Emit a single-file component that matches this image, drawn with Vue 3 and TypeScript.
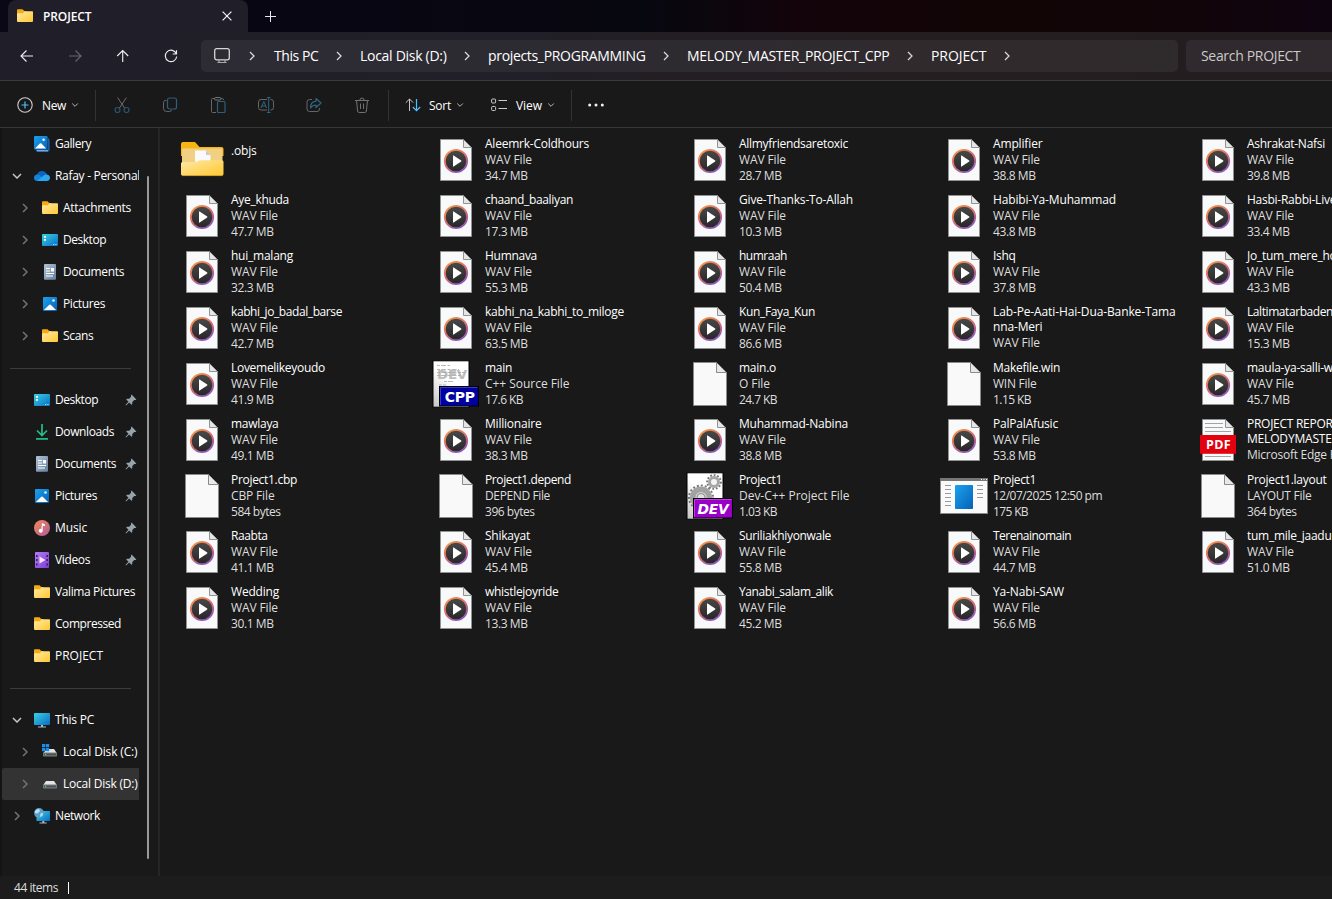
<script setup lang="ts">
interface Crumb { label: string; width: number }
interface NavItem {
  label: string
  icon: string
  depth?: number
  chevron?: 'open' | 'closed'
  pinned?: boolean
  selected?: boolean
  separator?: boolean
}
interface FileItem { icon: string; name: string[]; meta: string[] }

const crumbs: Crumb[] = [
  { label: 'This PC', width: 45 },
  { label: 'Local Disk (D:)', width: 87 },
  { label: 'projects_PROGRAMMING', width: 158 },
  { label: 'MELODY_MASTER_PROJECT_CPP', width: 203 },
  { label: 'PROJECT', width: 56 },
]

const tools = ['cut', 'copy', 'paste', 'rename', 'share', 'trash']

/* Label widths in pixels at 12px, used to tune the tracking of each label. */
const widths: Record<string, number> = {
  'Aleemrk-Coldhours': 104, 'Allmyfriendsaretoxic': 109, 'Amplifier': 49.5, 'Ashrakat-Nafsi': 78,
  'Aye_khuda': 58, 'chaand_baaliyan': 88, 'Give-Thanks-To-Allah': 114, 'Habibi-Ya-Muhammad': 123,
  'hui_malang': 62, 'Humnava': 52, 'humraah': 48, 'Ishq': 22.5, 'kabhi_jo_badal_barse': 111,
  'kabhi_na_kabhi_to_miloge': 139, 'Kun_Faya_Kun': 76, 'Lab-Pe-Aati-Hai-Dua-Banke-Tama': 182.5,
  'nna-Meri': 49.5, 'Laltimatarbaden': 86, 'Lovemelikeyoudo': 94, 'main': 27, 'main.o': 37,
  'Makefile.win': 67, 'mawlaya': 47.5, 'Millionaire': 56.5, 'Muhammad-Nabina': 109, 'PalPalAfusic': 65,
  'Project1.cbp': 66, 'Project1.depend': 86, 'Project1': 43, 'Project1.layout': 79.5, 'Raabta': 36.5,
  'Shikayat': 45, 'Suriliakhiyonwale': 92, 'Terenainomain': 78, 'tum_mile_jaadu': 84.5, 'Wedding': 48,
  'whistlejoyride': 73.5, 'Yanabi_salam_alik': 94, 'Ya-Nabi-SAW': 71, 'PROJECT REPORT': 92,
  'MELODYMASTER': 92, 'WAV File': 47, 'C++ Source File': 84.5, 'O File': 31, 'WIN File': 43.5,
  'CBP File': 43.5, 'DEPEND File': 65, 'Dev-C++ Project File': 110.5, '12/07/2025 12:50 pm': 109,
  'LAYOUT File': 64.5, '17.6 KB': 38, '24.7 KB': 38, '1.15 KB': 38, '1.03 KB': 38, '175 KB': 35,
  '584 bytes': 49.5, '396 bytes': 49.5, '364 bytes': 49.5, '.objs': 25.5,
  'Gallery': 36, 'Rafay - Personal': 85, 'Attachments': 68, 'Desktop': 43, 'Documents': 61,
  'Pictures': 42, 'Scans': 30.5, 'Downloads': 59, 'Music': 32, 'Videos': 35, 'Valima Pictures': 80,
  'Compressed': 66, 'PROJECT': 48, 'This PC': 39, 'Local Disk (C:)': 74.5, 'Local Disk (D:)': 74.5,
  'Network': 45,
}

const labelWidth = (text: string): number =>
  widths[text] ?? (/^\d\d\.\d MB$/.test(text) ? 42.5 : 0)

const vFit = {
  mounted(el: HTMLElement, binding: { value: number }) {
    const text = el.textContent ?? ''
    if (!binding.value || !text.length) return
    el.style.letterSpacing = '0px'
    const range = document.createRange()
    range.selectNodeContents(el)
    const natural = range.getBoundingClientRect().width
    el.style.letterSpacing = ((binding.value - natural) / text.length).toFixed(3) + 'px'
  },
}

const sep: NavItem = { label: '', icon: '', separator: true }
const nav: NavItem[] = [
  { label: 'Gallery', icon: 'gallery' },
  { label: 'Rafay - Personal', icon: 'cloud', chevron: 'open' },
  { label: 'Attachments', icon: 'folder', depth: 1, chevron: 'closed' },
  { label: 'Desktop', icon: 'desktop', depth: 1, chevron: 'closed' },
  { label: 'Documents', icon: 'documents', depth: 1, chevron: 'closed' },
  { label: 'Pictures', icon: 'pictures', depth: 1, chevron: 'closed' },
  { label: 'Scans', icon: 'folder', depth: 1, chevron: 'closed' },
  sep,
  { label: 'Desktop', icon: 'desktop', pinned: true },
  { label: 'Downloads', icon: 'downloads', pinned: true },
  { label: 'Documents', icon: 'documents', pinned: true },
  { label: 'Pictures', icon: 'pictures', pinned: true },
  { label: 'Music', icon: 'music', pinned: true },
  { label: 'Videos', icon: 'videos', pinned: true },
  { label: 'Valima Pictures', icon: 'folder' },
  { label: 'Compressed', icon: 'folder' },
  { label: 'PROJECT', icon: 'folder' },
  sep,
  { label: 'This PC', icon: 'pc', chevron: 'open' },
  { label: 'Local Disk (C:)', icon: 'diskc', depth: 1, chevron: 'closed' },
  { label: 'Local Disk (D:)', icon: 'disk', depth: 1, chevron: 'closed', selected: true },
  { label: 'Network', icon: 'network', chevron: 'closed' },
]

const wav = (size: string, ...name: string[]): FileItem => ({
  icon: 'wav', name, meta: size ? ['WAV File', size] : ['WAV File'],
})
const file = (icon: string, name: string[], ...meta: string[]): FileItem => ({ icon, name, meta })

const files: FileItem[] = [
  file('bigfolder', ['.objs']),
  wav('34.7 MB', 'Aleemrk-Coldhours'),
  wav('28.7 MB', 'Allmyfriendsaretoxic'),
  wav('38.8 MB', 'Amplifier'),
  wav('39.8 MB', 'Ashrakat-Nafsi'),
  wav('47.7 MB', 'Aye_khuda'),
  wav('17.3 MB', 'chaand_baaliyan'),
  wav('10.3 MB', 'Give-Thanks-To-Allah'),
  wav('43.8 MB', 'Habibi-Ya-Muhammad'),
  wav('33.4 MB', 'Hasbi-Rabbi-Live'),
  wav('32.3 MB', 'hui_malang'),
  wav('55.3 MB', 'Humnava'),
  wav('50.4 MB', 'humraah'),
  wav('37.8 MB', 'Ishq'),
  wav('43.3 MB', 'Jo_tum_mere_ho'),
  wav('42.7 MB', 'kabhi_jo_badal_barse'),
  wav('63.5 MB', 'kabhi_na_kabhi_to_miloge'),
  wav('86.6 MB', 'Kun_Faya_Kun'),
  wav('', 'Lab-Pe-Aati-Hai-Dua-Banke-Tama', 'nna-Meri'),
  wav('15.3 MB', 'Laltimatarbaden'),
  wav('41.9 MB', 'Lovemelikeyoudo'),
  file('cpp', ['main'], 'C++ Source File', '17.6 KB'),
  file('blank', ['main.o'], 'O File', '24.7 KB'),
  file('blank', ['Makefile.win'], 'WIN File', '1.15 KB'),
  wav('45.7 MB', 'maula-ya-salli-wa'),
  wav('49.1 MB', 'mawlaya'),
  wav('38.3 MB', 'Millionaire'),
  wav('38.8 MB', 'Muhammad-Nabina'),
  wav('53.8 MB', 'PalPalAfusic'),
  file('pdf', ['PROJECT REPORT', 'MELODYMASTER'], 'Microsoft Edge PDF'),
  file('blank', ['Project1.cbp'], 'CBP File', '584 bytes'),
  file('blank', ['Project1.depend'], 'DEPEND File', '396 bytes'),
  file('dev', ['Project1'], 'Dev-C++ Project File', '1.03 KB'),
  file('exe', ['Project1'], '12/07/2025 12:50 pm', '175 KB'),
  file('blank', ['Project1.layout'], 'LAYOUT File', '364 bytes'),
  wav('41.1 MB', 'Raabta'),
  wav('45.4 MB', 'Shikayat'),
  wav('55.8 MB', 'Suriliakhiyonwale'),
  wav('44.7 MB', 'Terenainomain'),
  wav('51.0 MB', 'tum_mile_jaadu'),
  wav('30.1 MB', 'Wedding'),
  wav('13.3 MB', 'whistlejoyride'),
  wav('45.2 MB', 'Yanabi_salam_alik'),
  wav('56.6 MB', 'Ya-Nabi-SAW'),
]
</script>

<template>
  <div class="window">
    <svg class="defs" width="0" height="0" aria-hidden="true">
      <defs>
        <linearGradient id="gFolder" x1="0" y1="0" x2="1" y2="1"><stop offset="0" stop-color="#ffe9a6" /><stop offset="1" stop-color="#ffc831" /></linearGradient>
        <linearGradient id="gTeal" x1="0" y1="0" x2="1" y2="1"><stop offset="0" stop-color="#37d2e4" /><stop offset="1" stop-color="#0b6cc4" /></linearGradient>
        <linearGradient id="gBlue" x1="0" y1="0" x2="1" y2="1"><stop offset="0" stop-color="#1ba2ee" /><stop offset="1" stop-color="#0661b8" /></linearGradient>
        <linearGradient id="gDoc" x1="0" y1="0" x2="1" y2="1"><stop offset="0" stop-color="#b3c4d6" /><stop offset="1" stop-color="#647f9c" /></linearGradient>
        <linearGradient id="gMusic" x1="0" y1="0" x2="1" y2="1"><stop offset="0" stop-color="#f58a55" /><stop offset="1" stop-color="#b05a9c" /></linearGradient>
        <linearGradient id="gVideo" x1="0" y1="0" x2="1" y2="1"><stop offset="0" stop-color="#b67cf2" /><stop offset="1" stop-color="#7b3bd8" /></linearGradient>
        <linearGradient id="gRing" x1="0.2" y1="0" x2="0.75" y2="1"><stop offset="0" stop-color="#f99346" /><stop offset="0.5" stop-color="#d76c72" /><stop offset="1" stop-color="#8b55c4" /></linearGradient>
        <linearGradient id="gDisc" x1="0" y1="0" x2="0" y2="1"><stop offset="0" stop-color="#4a4a4a" /><stop offset="1" stop-color="#262626" /></linearGradient>
        <linearGradient id="gPaper" x1="0" y1="1" x2=".7" y2="0"><stop offset="0" stop-color="#c4c4c4" /><stop offset=".6" stop-color="#ffffff" /></linearGradient>
      </defs>

      <symbol id="i-folder" viewBox="0 0 16 16">
        <path d="M0 2.500Q0 1.300 1 1.300H5.500L7.300 3H9V6H0Z" fill="#f6ab13" />
        <path d="M0 6Q0 5.200 .8 5.200H5.800L7.800 3.300H15.200Q16 3.300 16 4.100V13Q16 14 15 14H1Q0 14 0 13Z" fill="url(#gFolder)" />
      </symbol>
      <symbol id="i-gallery" viewBox="0 0 16 16">
        <path d="M14 2.2Q15.6 2.2 15.6 3.8V14Q15.6 15.6 14 15.6H3.5Q2.2 15.6 2 14.5H14Z" fill="#185fae" />
        <path d="M2.3 13.8H14V15.6H3.6Q2.4 15.6 2.3 14Z" fill="#6aa8ec" />
        <rect x="0" y="0" width="13.6" height="13.6" rx="1.2" fill="url(#gBlue)" />
        <path d="M1 12.6L5.8 7.6Q6.6 6.8 7.4 7.6L12.2 12.6Z" fill="#fff" /><circle cx="9.6" cy="3.8" r="1.3" fill="#e8f6ff" />
      </symbol>
      <symbol id="i-cloud" viewBox="0 0 16 16">
        <path d="M3 7Q4 3 8 3Q11.600 3 13 6.500L9 10H3Z" fill="#0b64bf" />
        <path d="M3.400 12.900Q0 12.900 0 9.900Q0 6.800 3.400 6.600Q5.500 6.500 7.500 8.400L10 12.900Z" fill="#1184dc" />
        <path d="M3 12.800Q5 11.500 8.500 8.500Q10.500 6 13 6.500Q16 7.400 16 9.800Q16 12.900 12.600 12.900H3.500Z" fill="#2ba7ef" />
      </symbol>
      <symbol id="i-desktop" viewBox="0 0 16 16">
        <rect x="0" y="2" width="16" height="12" rx="1" fill="url(#gTeal)" />
        <path d="M2 4h2v1.700H2zM2 7h2v1.700H2z" fill="#fff" /><path d="M11 12.600h1.300M13.300 12.600h1.300" stroke="#b8e8ff" stroke-width="1" />
      </symbol>
      <symbol id="i-documents" viewBox="0 0 16 16">
        <rect x="2" y="0" width="12" height="15.800" rx="1" fill="url(#gDoc)" />
        <path d="M4 4.500h4M4 7h4M4 9.500h8M4 12h7" stroke="#fff" stroke-width="1.100" /><rect x="9" y="4" width="3" height="3.500" fill="#fff" />
      </symbol>
      <symbol id="i-pictures" viewBox="0 0 16 16">
        <rect x="1" y="1" width="14" height="14" rx="1" fill="url(#gBlue)" />
        <path d="M2 14L7 9Q8 8.200 9 9L14 14Z" fill="#fff" /><circle cx="11.500" cy="4.500" r="1.300" fill="#dff4ff" />
      </symbol>
      <symbol id="i-downloads" viewBox="0 0 16 16">
        <path d="M8 0V11M3 6.500L8 11.500L13 6.500" fill="none" stroke="#25bd8a" stroke-width="1.700" /><rect x="2" y="14" width="12" height="1.800" fill="#22b888" />
      </symbol>
      <symbol id="i-music" viewBox="0 0 16 16">
        <circle cx="8" cy="8" r="8" fill="url(#gMusic)" />
        <path d="M8 3L11 4.500V6.200L8.700 5.400V10.800A2 1.900 0 1 1 7.400 9Z" fill="#fff" />
      </symbol>
      <symbol id="i-videos" viewBox="0 0 16 16">
        <rect x="1" y="0" width="14" height="16" rx="1" fill="url(#gVideo)" />
        <path d="M2 3h1.600v2H2zM2 7h1.600v2H2zM2 11.500h1.600v2H2zM12.400 3H14v2h-1.600zM12.400 7H14v2h-1.600zM12.400 11.500H14v2h-1.600z" fill="#38206b" /><path d="M5.500 4.500L11.500 8L5.500 11.500Z" fill="#f1e7ff" />
      </symbol>
      <symbol id="i-pc" viewBox="0 0 16 16">
        <rect x="0" y="1" width="16" height="12" rx=".8" fill="url(#gTeal)" /><path d="M7 13h2v1.500h3V15.500H4V14.500H7Z" fill="#a8b8c4" />
      </symbol>
      <symbol id="i-disk" viewBox="0 0 16 16">
        <path d="M4 5h8l2.700 4H1.300Z" fill="#e4e4e4" /><rect x="1" y="8.500" width="14" height="4" rx=".8" fill="#77797b" /><rect x="2" y="9.600" width="12" height="1.700" fill="#4b4f50" /><rect x="3" y="9.900" width="1.200" height="1.200" fill="#4bdc4b" />
      </symbol>
      <symbol id="i-diskc" viewBox="0 0 16 16">
        <path d="M5 5h7l2.700 4H1.300Z" fill="#e4e4e4" /><rect x="1" y="8.500" width="14" height="4" rx=".8" fill="#77797b" /><rect x="2" y="9.600" width="12" height="1.700" fill="#4b4f50" /><rect x="3" y="9.900" width="1.200" height="1.200" fill="#4bdc4b" />
        <path d="M0 0h3.300v3.300H0zM3.900 0h3.300v3.300H3.900zM0 3.900h3.300v3.300H0zM3.900 3.900h3.300v3.300H3.900z" fill="#1b8fe8" />
      </symbol>
      <symbol id="i-network" viewBox="0 0 16 16">
        <rect x="2.500" y="3" width="13.500" height="10" rx=".6" fill="url(#gTeal)" /><path d="M8.300 13h2v1.500h2.400v1H5.500v-1h2.800Z" fill="#a8b8c4" />
        <circle cx="5" cy="5" r="4.900" fill="#5a9fce" /><path d="M1 3Q3 .8 5 1L6 3L3.500 5.500L1 5ZM6.500 5.500L9 4.800L8.500 7.800L6 9Z" fill="#b9dff2" />
      </symbol>
      <symbol id="i-pin" viewBox="0 0 12 12">
        <path d="M6.600 .6L11.400 5.400L10.300 6.100L9.300 5.900L7.300 7.900L7.200 10.200L6.400 10.800L4.200 8.500L1.300 11.300L.6 11.400L.7 10.700L3.500 7.800L1.200 5.600L1.900 4.800L4.200 4.700L6.100 2.700L5.900 1.700Z" fill="#98a3ab" />
      </symbol>

      <symbol id="i-bigfolder" viewBox="0 0 48 48">
        <path d="M3 8Q3 6 5 6H17L21.500 11H43.500Q45.500 11 45.500 13V20H3Z" fill="#f8b414" />
        <path d="M4 13.500Q4 12.500 5 12.500H44.500V32H4Z" fill="#f1cf83" />
        <path d="M17 14.500H28L32.500 19V28H17Z" fill="#fafafa" /><path d="M28 14.500V19H32.500Z" fill="#c9c9c9" />
        <path d="M3 27.500Q3 26 4.500 26H17Q19 26 20.500 25L21.500 24.300H44Q45.500 24.300 45.500 25.800V38Q45.500 39.700 43.700 39.700H4.800Q3 39.700 3 38Z" fill="url(#gFolder)" />
        <path d="M4 39.600H44.500" stroke="#d9a02b" stroke-width=".8" />
      </symbol>
      <symbol id="i-blank" viewBox="0 0 48 48">
        <path d="M7.500 2.500H30.500L40.500 12.500V45.500H7.500Z" fill="#f9f9f9" stroke="#8a8a8a" /><path d="M30.500 2.500V12.500H40.500Z" fill="#e8e8e8" stroke="#8a8a8a" />
      </symbol>
      <symbol id="i-wav" viewBox="0 0 48 48">
        <path d="M8.500 3.500H31.500L39.500 11.500V44.500H8.500Z" fill="#f8f9fa" stroke="#929292" /><path d="M31.500 3.500V11.500H39.500Z" fill="#e6e6e6" stroke="#929292" />
        <circle cx="24" cy="25" r="11.200" fill="url(#gDisc)" stroke="url(#gRing)" stroke-width="1.800" />
        <path d="M21 19.600Q21 19 21.600 19.400L29.200 24.500Q29.700 25 29.200 25.400L21.600 30.600Q21 31 21 30.400Z" fill="#fff" />
      </symbol>
      <symbol id="i-pdf" viewBox="0 0 48 48">
        <path d="M8.500 3.500H31.500L39.500 11.500V44.500H8.500Z" fill="#f8f9fa" stroke="#929292" /><path d="M31.500 3.500V11.500H39.500Z" fill="#e6e6e6" stroke="#929292" />
        <path d="M11 7.500H29M11 11.500H29M11 15.500H37M11 40.500H37" stroke="#a3a3a3" />
        <rect x="6" y="19" width="36" height="18.800" fill="#e3000f" />
        <text x="24.200" y="33" text-anchor="middle" textLength="24.500" font-family="'Open Sans', sans-serif" font-weight="700" font-size="12.500" fill="#fff">PDF</text>
      </symbol>
      <symbol id="i-cpp" viewBox="0 0 48 48">
        <rect x="1" y=".8" width="36" height="46.400" fill="url(#gPaper)" stroke="#000" />
        <text x="5" y="18.500" textLength="30" lengthAdjust="spacingAndGlyphs" font-family="'DejaVu Sans', sans-serif" font-weight="700" font-size="13" fill="#bdbdbd">DEV</text>
        <path d="M5 5.500H18M12 21.500H21M7 25H14M5 9.500H27M5 12.500H33M5 15.500H30" stroke="#a4a4a4" stroke-dasharray="3 1 5 1.500" stroke-width=".8" />
        <rect x="7.500" y="26.500" width="39" height="19.500" fill="#0000a0" stroke="#000" />
        <path d="M8.500 45V27.500H45.500" fill="none" stroke="#3a3ac8" />
        <text x="27.700" y="42" text-anchor="middle" textLength="30" lengthAdjust="spacingAndGlyphs" font-family="'DejaVu Sans', sans-serif" font-weight="700" font-size="14.500" fill="#fff">CPP</text>
      </symbol>
      <symbol id="i-dev" viewBox="0 0 48 48">
        <rect x="1" y=".8" width="36" height="46.400" fill="url(#gPaper)" stroke="#000" />
        <circle cx="15" cy="25.500" r="12" fill="none" stroke="#777" stroke-width="2" stroke-dasharray="2 2" /><circle cx="15" cy="25.500" r="8.300" fill="#d2d2d2" stroke="#a2a2a2" stroke-width="5.500" /><circle cx="15" cy="25.500" r="4" fill="#e2e2e2" stroke="#8a8a8a" />
        <circle cx="28" cy="10" r="6.800" fill="none" stroke="#777" stroke-width="2" stroke-dasharray="1.800 1.700" /><circle cx="28" cy="10" r="4.500" fill="#f4f4f4" stroke="#a6a6a6" stroke-width="3" />
        <rect x="7.500" y="26.500" width="39" height="19.500" fill="#9a00c8" stroke="#000" /><path d="M8.500 45V27.500H45.500" fill="none" stroke="#c040e4" />
        <text x="27" y="42" text-anchor="middle" textLength="31" lengthAdjust="spacingAndGlyphs" font-family="'DejaVu Sans', sans-serif" font-style="italic" font-weight="700" font-size="14.500" fill="#fff">DEV</text>
      </symbol>
      <symbol id="i-exe" viewBox="0 0 48 48">
        <rect x=".5" y="6.500" width="47" height="35" fill="#fafafa" stroke="#8a8a86" /><rect x="0" y="6" width="48" height="3" fill="#777773" />
        <path d="M41 7.500h1M43.500 7.500h1M46 7.500h1" stroke="#fff" />
        <path d="M5 13.500h6M5 17.500h6M5 21.500h6M5 25.500h6M5 29.500h6M5 33.500h6M37 13.500h6M37 17.500h6M37 21.500h6M37 25.500h6" stroke="#999" />
        <rect x="15" y="13" width="18" height="24" rx=".8" fill="url(#gBlue)" />
      </symbol>

      <symbol id="i-cut" viewBox="0 0 16 16">
        <path d="M3.600 .6L10.700 11.200M12.400 .6L5.300 11.200" fill="none" stroke="#6f6f6f" /><circle cx="3.500" cy="13" r="2.500" fill="none" stroke="#28566e" stroke-width="1.200" /><circle cx="12.500" cy="13" r="2.500" fill="none" stroke="#28566e" stroke-width="1.200" />
      </symbol>
      <symbol id="i-copy" viewBox="0 0 16 16">
        <path d="M4.500 3.500H3.200Q1.500 3.700 1.500 5.700V11.500Q1.500 14.500 4.500 14.500H7.500Q9.300 14.500 9.600 13" fill="none" stroke="#666" /><rect x="5.500" y="1" width="9" height="11" rx="2" fill="none" stroke="#2a5f7d" stroke-width="1.200" />
      </symbol>
      <symbol id="i-paste" viewBox="0 0 16 16">
        <path d="M5 1.500H2.500Q1.500 1.500 1.500 2.500V14.500Q1.500 15.500 2.500 15.500H6M11 1.500H12.500Q13.500 1.500 13.500 3" fill="none" stroke="#666" /><rect x="4.500" y=".5" width="6.500" height="2.500" rx="1.200" fill="none" stroke="#777" /><rect x="7.500" y="4.500" width="7.500" height="11" rx="1" fill="none" stroke="#2a5f7d" stroke-width="1.200" />
      </symbol>
      <symbol id="i-rename" viewBox="0 0 16 16">
        <path d="M9 2.500H3Q.5 2.500 .5 5V10.500Q.5 13 3 13H9M12.500 2.500H13Q15.500 2.500 15.500 5V10.500Q15.500 13 13 13H12.500" fill="none" stroke="#666" /><path d="M3 11L5.800 4.500L8.600 11M4 9H7.700M9 .5H12.500M9 15.500H12.500M10.700 .5V15.500" fill="none" stroke="#2d6685" />
      </symbol>
      <symbol id="i-share" viewBox="0 0 16 16">
        <path d="M6 2.500H3.500Q1 2.500 1 5V12Q1 14.500 3.500 14.500H11Q13.500 14.500 13.500 12V11" fill="none" stroke="#666" /><path d="M10 1.500L15 6L10 10.500V8Q6.500 8 4.500 11Q4.500 4.500 10 4.100Z" fill="none" stroke="#2d6685" stroke-width="1.200" stroke-linejoin="round" />
      </symbol>
      <symbol id="i-trash" viewBox="0 0 16 16">
        <path d="M1 3.500H15M5.800 3.500Q5.800 1 8 1Q10.200 1 10.200 3.500M2.500 3.500L3.600 14Q3.800 15.500 5.200 15.500H10.800Q12.200 15.500 12.400 14L13.500 3.500M6.500 6.500V12M9.500 6.500V12" fill="none" stroke="#727272" />
      </symbol>
    </svg>

    <header class="titlebar">
      <div class="tab">
        <svg class="ic16"><use href="#i-folder" /></svg>
        <span v-fit="48.5" class="tab-title">PROJECT</span>
        <svg class="tab-close" width="10" height="10" viewBox="0 0 10 10"><path d="M.6 .6L9.400 9.400M9.400 .6L.6 9.400" stroke="#f4f4f4" stroke-width="1.200" /></svg>
      </div>
      <svg class="new-tab" width="11" height="11" viewBox="0 0 11 11"><path d="M5.500 0V11M0 5.500H11" stroke="#e8e8e8" /></svg>
    </header>

    <nav class="navbar">
      <div class="nav-buttons">
        <svg viewBox="0 0 16 16"><path d="M14 8H2.200M7.500 2.500L2 8L7.500 13.500" /></svg>
        <svg class="dim" viewBox="0 0 16 16"><path d="M2 8H13.800M8.500 2.500L14 8L8.500 13.500" /></svg>
        <svg viewBox="0 0 16 16"><path d="M7.700 14V2.500M2.200 8L7.700 2.500L13.200 8" /></svg>
        <svg viewBox="0 0 16 16"><path d="M13.400 6A5.700 5.700 0 1 0 13.700 8.500M13.500 2.300V6H9.700" /></svg>
      </div>
      <div class="address">
        <svg class="monitor" width="16" height="16" viewBox="0 0 16 16"><rect x=".7" y=".7" width="14.600" height="11.100" rx="2" fill="none" stroke="#d6d6d6" stroke-width="1.300" /><path d="M5 12v2.500M11 12v2.500M3.500 14.500h9" stroke="#aaa" stroke-width="1.200" /></svg>
        <svg class="crumb-chevron first" viewBox="0 0 6 10"><path d="M1 1L5 5L1 9" /></svg>
        <template v-for="c in crumbs" :key="c.label">
          <span class="crumb" :style="{ width: c.width + 'px' }"><span v-fit="c.width - 0.5">{{ c.label }}</span></span>
          <svg class="crumb-chevron" viewBox="0 0 6 10"><path d="M1 1L5 5L1 9" /></svg>
        </template>
      </div>
      <div v-fit="99.5" class="search">Search PROJECT</div>
    </nav>

    <div class="commands">
      <div class="cmd cmd-new">
        <svg width="16" height="16" viewBox="0 0 16 16"><circle cx="8" cy="8" r="7.200" fill="none" stroke="#cfcfcf" stroke-width="1.100" /><path d="M8 4.500V11.500M4.500 8H11.500" stroke="#4cc2ff" stroke-width="1.200" /></svg>
        <span v-fit="24">New</span>
        <svg class="caret" viewBox="0 0 6 4"><path d="M.2 .5L3 3.300L5.800 .5" /></svg>
      </div>
      <i class="rule" />
      <div class="tool-icons">
        <svg v-for="t in tools" :key="t" class="ic16"><use :href="'#i-' + t" /></svg>
      </div>
      <i class="rule" />
      <div class="cmd cmd-sort">
        <svg width="16" height="14" viewBox="0 0 16 14"><path d="M4.500 13V1M.8 4.700L4.500 1L8.200 4.700" fill="none" stroke="#c8c8c8" /><path d="M11.500 1V12.500M7.800 9L11.500 12.700L15.200 9" fill="none" stroke="#4cc2ff" stroke-width="1.200" /></svg>
        <span v-fit="22">Sort</span>
        <svg class="caret" viewBox="0 0 6 4"><path d="M.2 .5L3 3.300L5.800 .5" /></svg>
      </div>
      <div class="cmd cmd-view">
        <svg width="16" height="14" viewBox="0 0 16 14"><rect x=".6" y="1" width="4" height="4" rx="1" fill="none" stroke="#ccc" /><rect x=".6" y="8.500" width="4" height="4" rx="1" fill="none" stroke="#ccc" /><path d="M7.500 2.500H16M7.500 10.500H16" stroke="#ccc" /></svg>
        <span v-fit="26">View</span>
        <svg class="caret" viewBox="0 0 6 4"><path d="M.2 .5L3 3.300L5.800 .5" /></svg>
      </div>
      <i class="rule" />
      <svg class="more" width="16" height="4" viewBox="0 0 16 4"><circle cx="1.700" cy="2" r="1.500" fill="#f2f2f2" /><circle cx="8" cy="2" r="1.500" fill="#f2f2f2" /><circle cx="14.300" cy="2" r="1.500" fill="#f2f2f2" /></svg>
    </div>

    <div class="body">
      <aside class="sidebar">
        <div class="tree">
          <div v-for="(n, i) in nav" :key="i" class="node" :class="{ nested: n.depth, selected: n.selected, separator: n.separator }">
            <template v-if="!n.separator">
              <span class="expander">
                <svg v-if="n.chevron === 'open'" width="10" height="6" viewBox="0 0 10 6"><path d="M1 1L5 5L9 1" fill="none" stroke="#c6c6c6" stroke-width="1.500" /></svg>
                <svg v-else-if="n.chevron" width="6" height="10" viewBox="0 0 6 10"><path d="M1 1L5 5L1 9" fill="none" stroke="#747474" stroke-width="1.500" /></svg>
              </span>
              <svg class="ic16"><use :href="'#i-' + n.icon" /></svg>
              <span v-fit="labelWidth(n.label)" class="node-label">{{ n.label }}</span>
              <svg v-if="n.pinned" class="pin" width="12" height="12"><use href="#i-pin" /></svg>
            </template>
          </div>
        </div>
        <div class="scroll-track"><div class="scroll-thumb" /></div>
      </aside>

      <main class="files">
        <div v-for="(f, i) in files" :key="i" class="file" :class="{ short: !f.meta.length }">
          <svg class="ic48"><use :href="'#i-' + f.icon" /></svg>
          <div class="file-text">
            <div class="file-name"><div v-for="l in f.name" :key="l" v-fit="labelWidth(l)" class="line">{{ l }}</div></div>
            <div v-for="m in f.meta" :key="m" v-fit="labelWidth(m)" class="line file-meta">{{ m }}</div>
          </div>
        </div>
      </main>
    </div>

    <footer class="status"><span v-fit="44">44 items</span><i class="bar" /></footer>
  </div>
</template>

<style>
html, body { margin: 0; background: #191919; overflow: hidden; }
</style>

<style scoped>
.window { width: 1332px; height: 899px; display: flex; flex-direction: column; overflow: hidden; background: #191919; color: #fff; font: 12px/16px 'Open Sans', 'Noto Sans', sans-serif; letter-spacing: -0.25px; white-space: nowrap; }
.defs { position: absolute; }
.ic16 { width: 16px; height: 16px; flex: none; }
.ic48 { width: 48px; height: 48px; flex: none; }

.titlebar { height: 32px; flex: none; display: flex; align-items: center; background: linear-gradient(90deg, #0a0716 0%, #090613 25%, #07070f 48%, #12040a 60%, #120505 76%, #12050a 90%, #0e0410 100%); }
.tab { width: 240px; height: 32px; flex: none; margin-left: 8px; box-sizing: border-box; padding: 0 16px 0 9px; display: flex; align-items: center; border-radius: 8px 8px 0 0; background: #201e28; }
.tab-title { margin-left: 10px; margin-right: auto; padding-top: 1px; font-weight: 600; }
.new-tab { margin-left: 17px; margin-top: 1px; }

.navbar { height: 48px; flex: none; display: flex; align-items: center; background: linear-gradient(90deg, #201e28 0%, #211f27 40%, #251e21 65%, #241d1f 100%); border-bottom: 1px solid #3a3a3a; }
.nav-buttons { width: 201px; flex: none; box-sizing: border-box; padding-left: 19px; display: flex; gap: 32px; }
.nav-buttons svg { width: 16px; height: 16px; flex: none; fill: none; stroke: #ededed; stroke-width: 1.150; }
.nav-buttons .dim { stroke: #67656d; }
.address { width: 977px; height: 32px; flex: none; box-sizing: border-box; padding-left: 13px; display: flex; align-items: center; border-radius: 5px; background: linear-gradient(90deg, #2d2b34, #2d2b31 45%, #312a2c 80%, #2f2a2c); font-size: 14px; }
.monitor { flex: none; margin-right: 19px; }
.crumb-chevron { width: 6px; height: 10px; flex: none; margin-right: 18px; fill: none; stroke: #d8d8d8; stroke-width: 1.300; }
.crumb-chevron.first { margin-right: 19px; }
.crumb { flex: none; margin-right: 17px; }
.search { width: 160px; height: 32px; flex: none; line-height: 32px; box-sizing: border-box; margin-left: 8px; padding-left: 15px; border-radius: 5px 0 0 5px; background: #302a2e; color: #cbc9ca; font-size: 14px; }

.commands { height: 47px; flex: none; box-sizing: border-box; padding-top: 2px; display: flex; align-items: center; border-bottom: 1px solid #363636; background: #191919; }
.cmd { display: flex; align-items: center; flex: none; box-sizing: border-box; }
.cmd-new { width: 95px; padding-left: 17px; }
.cmd-new span { margin-left: 9px; }
.cmd-sort { width: 102px; padding-left: 16px; }
.cmd-sort span { margin-left: 8px; }
.cmd-view { width: 80px; }
.cmd-view span { margin-left: 9px; }
.cmd span { padding-top: 1px; }
.caret { width: 6px; height: 4px; margin-left: 6px; fill: none; stroke: #b8b8b8; overflow: visible; }
.rule { width: 1px; height: 31px; flex: none; background: #333; }
.tool-icons { width: 292px; flex: none; box-sizing: border-box; padding-left: 18px; display: flex; gap: 32px; }
.more { margin-left: 16px; }

.body { height: 748px; flex: none; display: flex; }
.sidebar { width: 160px; flex: none; box-sizing: border-box; display: flex; border-right: 2px solid #262626; border-left: 2px solid #141414; }
.tree { width: 137px; flex: none; overflow: hidden; }
.node { height: 32px; display: flex; align-items: center; box-sizing: border-box; padding-left: 8px; }
.node.nested { padding-left: 16px; }
.node.selected { background: #333; border-radius: 2px 0 0 2px; }
.node.separator::before { content: ''; width: 121px; height: 1px; background: #3c3c3c; }
.expander { width: 13px; margin-right: 11px; flex: none; display: flex; justify-content: center; }
.node-label { margin-left: 5px; flex: none; }
.pin { margin-left: auto; margin-right: 2px; flex: none; }
.scroll-track { padding: 48px 0 17px 8px; }
.scroll-thumb { width: 2px; height: 100%; border-radius: 1px; background: #9a9a9a; }

.files { flex: none; padding: 4px 0 0 18px; display: grid; grid-template-columns: repeat(5, 254px); grid-auto-rows: 56px; align-content: start; }
.file { display: flex; padding-top: 4px; }
.file-text { margin-left: 5px; line-height: 15px; }
.line { width: max-content; }
.file.short .file-text { padding-top: 7px; }
.file-meta { margin-top: 1px; color: #dedede; }

.status { height: 23px; flex: none; display: flex; align-items: center; padding-left: 14px; background: #1c1c1c; color: #dedede; }
.bar { width: 1px; height: 12px; margin-left: 10px; background: #fff; }
</style>
